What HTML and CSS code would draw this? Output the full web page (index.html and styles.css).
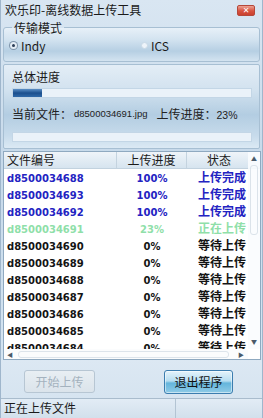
FILE: index.html
```html
<!DOCTYPE html>
<html lang="zh-CN">
<head>
<meta charset="UTF-8">
<title>欢乐印-离线数据上传工具</title>
<link rel="stylesheet" href="styles.css">
</head>
<body>

<div class="window">
    <div class="titlebar">
        <span class="title">欢乐印-离线数据上传工具</span>
        <span class="close-btn">✕</span>
    </div>

    <fieldset class="group">
        <legend>传输模式</legend>
        <div class="radios">
            <label class="radio checked"><span class="dot"></span>Indy</label>
            <label class="radio"><span class="dot"></span>ICS</label>
        </div>
    </fieldset>

    <div class="panel">
        <div class="caption">总体进度</div>
        <div class="bar"><div class="fill" style="width: 12%"></div></div>
        <div class="current">
            <span>当前文件：</span>
            <span class="small">d8500034691.jpg</span>
            <span class="gap">上传进度：<span class="small">23%</span></span>
        </div>
        <div class="bar"></div>
    </div>

    <div class="list">
        <div class="head">
            <div class="c1">文件编号</div>
            <div class="c2">上传进度</div>
            <div class="c3">状态</div>
        </div>
        <div class="rows">
            <div class="row done"><div class="c1">d8500034688</div><div class="c2">100%</div><div class="c3">上传完成</div></div>
            <div class="row done"><div class="c1">d8500034693</div><div class="c2">100%</div><div class="c3">上传完成</div></div>
            <div class="row done"><div class="c1">d8500034692</div><div class="c2">100%</div><div class="c3">上传完成</div></div>
            <div class="row active"><div class="c1">d8500034691</div><div class="c2">23%</div><div class="c3">正在上传</div></div>
            <div class="row"><div class="c1">d8500034690</div><div class="c2">0%</div><div class="c3">等待上传</div></div>
            <div class="row"><div class="c1">d8500034689</div><div class="c2">0%</div><div class="c3">等待上传</div></div>
            <div class="row"><div class="c1">d8500034688</div><div class="c2">0%</div><div class="c3">等待上传</div></div>
            <div class="row"><div class="c1">d8500034687</div><div class="c2">0%</div><div class="c3">等待上传</div></div>
            <div class="row"><div class="c1">d8500034686</div><div class="c2">0%</div><div class="c3">等待上传</div></div>
            <div class="row"><div class="c1">d8500034685</div><div class="c2">0%</div><div class="c3">等待上传</div></div>
            <div class="row"><div class="c1">d8500034684</div><div class="c2">0%</div><div class="c3">等待上传</div></div>
        </div>
        <div class="vscroll">
            <span class="arrow up">▲</span>
            <span class="thumb"></span>
            <span class="arrow down">▼</span>
        </div>
        <div class="hscroll">
            <span class="arrow">◀</span>
            <span class="hthumb"></span>
            <span class="arrow">▶</span>
        </div>
    </div>

    <div class="buttons">
        <button class="btn" disabled>开始上传</button>
        <button class="btn primary">退出程序</button>
    </div>

    <div class="statusbar">
        <div class="status-text">正在上传文件</div>
        <div class="status-rest"></div>
    </div>
</div>

</body>
</html>
```

FILE: styles.css
```css
* {
    margin: 0;
    padding: 0;
    box-sizing: border-box;
}
body {
    width: 263px;
    height: 418px;
    overflow: hidden;
    font-family: "Noto Sans CJK SC", sans-serif;
    font-size: 12px;
    color: #1a1a1a;
}
.window {
    width: 263px;
    height: 418px;
    display: flex;
    flex-direction: column;
    background: linear-gradient(#d9e6f2, #c6d9ea 40%, #d4e4f1 85%, #dce8f3);
    border-left: 1px solid #9fb6cc;
    border-right: 1px solid #9fb6cc;
}
.titlebar {
    height: 22px;
    display: flex;
    align-items: center;
    justify-content: space-between;
    padding: 0 7px 0 4px;
}
.title {
    font-size: 12px;
    line-height: 20px;
    margin-top: -1px;
}
.close-btn {
    width: 18px;
    height: 11px;
    margin-top: -1px;
    border-radius: 2px;
    border: 1px solid #b5483a;
    background: linear-gradient(#eca294, #d8523f 55%, #c9412f);
    color: #fff;
    font-family: "DejaVu Sans", sans-serif;
    font-size: 8px;
    font-weight: bold;
    line-height: 9px;
    text-align: center;
}
.group {
    margin: 0 2px;
    height: 40px;
    min-inline-size: 0;
    border: 1px solid #a7bfd3;
    border-radius: 3px;
    padding: 0 6px;
    background: linear-gradient(#e7f0f8, #d3e3f0 35%, #b6cfe3 70%, #d3e3f0);
}
.group legend {
    padding: 0 2px;
    margin-left: 2px;
    font-size: 12px;
    line-height: 12px;
}
.radios {
    display: flex;
    padding-top: 5px;
}
.radio {
    display: flex;
    align-items: center;
    gap: 3px;
    font-size: 12px;
    line-height: 14px;
}
.radio.checked {
    width: 131px;
}
.radio .dot {
    width: 7px;
    height: 7px;
    border-radius: 50%;
    background: #eef4fa;
    border: 1px solid #c9d9e6;
}
.radio.checked .dot {
    background: #2c3e57;
    border: 2px solid #e4edf5;
    box-shadow: 0 0 0 1px #7f95ab;
    margin-right: 1px;
}
.panel {
    margin: 2px 2px 0;
    height: 86px;
    border: 1px solid #a7bfd3;
    border-radius: 2px;
    padding: 4px 7px 0 8px;
    background: linear-gradient(#e3edf6, #d2e2ef 30%, #b3cde2 60%, #c7dbeb 85%, #dbe9f4);
}
.caption {
    font-size: 12px;
    line-height: 16px;
}
.bar {
    height: 10px;
    margin-top: 3px;
    background: #eaf2f9;
    border: 1px solid #c3d6e6;
}
.fill {
    height: 100%;
    background: linear-gradient(#5b8fc6, #1b4f8d 50%, #2f69a8);
}
.current {
    margin-top: 8px;
    height: 16px;
    display: flex;
    align-items: center;
    font-size: 12px;
    color: #222;
}
.small {
    font-family: "Liberation Sans", sans-serif;
    font-size: 9.5px;
}
.current .small {
    margin-left: 2px;
}
.gap {
    margin-left: 9px;
}
.gap .small {
    font-size: 10.5px;
    margin-left: 0;
}
.current + .bar {
    margin-top: 10px;
}
.list {
    position: relative;
    margin: 2px 1px 0 2px;
    height: 211px;
    background: #fff;
    border: 1px solid #8fa9c0;
    overflow: hidden;
}
.head {
    display: grid;
    grid-template-columns: 113px 70px 64px;
    height: 17px;
    background: linear-gradient(#eff4f9, #d6e4ef);
    border-bottom: 1px solid #c2d2df;
    font-size: 12px;
    line-height: 16px;
}
.head .c1 {
    padding-left: 3px;
    border-right: 1px solid #c4d3df;
}
.head .c2 {
    text-align: center;
    border-right: 1px solid #c4d3df;
}
.head .c3 {
    text-align: center;
}
.rows {
    padding-top: 1px;
    height: 182px;
    overflow: hidden;
}
.row {
    display: grid;
    grid-template-columns: 113px 70px 70px;
    height: 17px;
    line-height: 17px;
    font-family: "DejaVu Sans", "Noto Sans CJK SC", sans-serif;
    font-size: 10px;
    font-weight: bold;
    color: #141414;
    white-space: nowrap;
}
.row .c1 {
    padding-left: 3px;
}
.row .c2 {
    text-align: center;
}
.row .c3 {
    font-size: 12px;
    text-align: center;
    overflow: hidden;
}
.row.done {
    color: #2323c2;
}
.row.active {
    color: #8fdfa9;
}
.vscroll {
    position: absolute;
    right: 0;
    top: 0;
    width: 12px;
    bottom: 10px;
    background: rgba(250, 252, 254, 0.9);
    display: flex;
    flex-direction: column;
    align-items: center;
}
.vscroll .arrow {
    font-size: 6px;
    line-height: 10px;
    color: #4a5a6a;
    height: 10px;
}
.vscroll .up {
    margin-top: 2px;
}
.vscroll .thumb {
    width: 8px;
    height: 70px;
    margin-top: 1px;
    border: 1px solid #dbe3ea;
    border-radius: 3px;
}
.vscroll .down {
    margin-top: auto;
    margin-bottom: 2px;
}
.hscroll {
    position: absolute;
    left: 0;
    right: 12px;
    bottom: 0;
    height: 10px;
    background: #fbfcfd;
    display: flex;
    align-items: center;
    padding: 0 3px 0 2px;
}
.hscroll .arrow {
    font-size: 6px;
    color: #4a5a6a;
    width: 8px;
    text-align: center;
}
.hthumb {
    flex: 1;
    height: 7px;
    margin: 0 8px 0 4px;
    border: 1px solid #dde4eb;
    border-radius: 3px;
}
.buttons {
    height: 38px;
    display: flex;
    align-items: center;
    padding: 0 0 0 23px;
    gap: 69px;
    background: linear-gradient(#dce8f3, #d6e4f0);
}
.btn {
    width: 71px;
    height: 23px;
    margin-top: 5px;
    font-family: "Noto Sans CJK SC", sans-serif;
    font-size: 12px;
    border-radius: 3px;
    border: 1px solid #b7c6d3;
    background: linear-gradient(#e8eef3, #dbe4eb);
    color: #a4b2be;
}
.btn.primary {
    width: 69px;
    height: 24px;
    border: 1px solid #3b7daf;
    background: linear-gradient(#e4f3fb, #b8def1 45%, #64b5dc 55%, #8fcbe7);
    color: #111;
    box-shadow: inset 0 0 0 1px rgba(255, 255, 255, 0.5);
}
.statusbar {
    height: 20px;
    margin-top: auto;
    display: flex;
    border-top: 1px solid #a9bccd;
    background: linear-gradient(#e2ecf5, #d2e0ec);
}
.status-text {
    width: 175px;
    padding-left: 3px;
    font-size: 12px;
    line-height: 18px;
    border-right: 1px solid #b3c4d3;
}
.status-rest {
    flex: 1;
}
```
